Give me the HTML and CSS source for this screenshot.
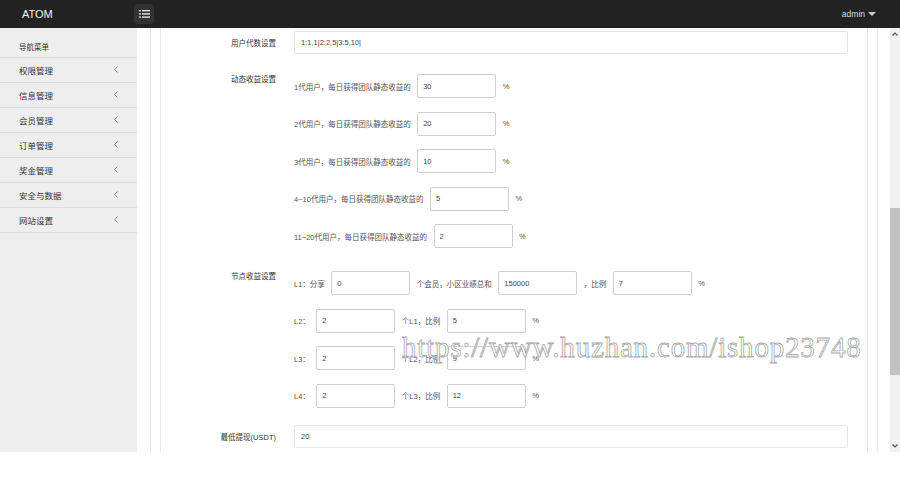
FILE: index.html
```html
<!DOCTYPE html>
<html lang="zh">
<head>
<meta charset="utf-8">
<title>ATOM</title>
<link rel="stylesheet" href="styles.css">
</head>
<body>
<div class="app">
  <header class="topbar">
    <div class="brand">ATOM</div>
    <button class="menu-btn" type="button" aria-label="menu">
      <svg width="11" height="8" viewBox="0 0 11 8">
        <rect x="0" y="0" width="2" height="1.4" fill="#cfcfcf"/>
        <rect x="3" y="0" width="8" height="1.4" fill="#e6e6e6"/>
        <rect x="0" y="3.2" width="2" height="1.4" fill="#cfcfcf"/>
        <rect x="3" y="3.2" width="8" height="1.4" fill="#e6e6e6"/>
        <rect x="0" y="6.4" width="2" height="1.4" fill="#cfcfcf"/>
        <rect x="3" y="6.4" width="8" height="1.4" fill="#e6e6e6"/>
      </svg>
    </button>
    <div class="user">admin <span class="caret"></span></div>
  </header>
  <div class="layout">
    <nav class="sidebar">
      <div class="nav-head">导航菜单</div>
      <div class="nav-item"><span>权限管理</span><svg class="chev" width="4" height="7" viewBox="0 0 4 7"><path d="M3.5 0.5 L0.7 3.5 L3.5 6.5" fill="none" stroke="#777" stroke-width="0.9"/></svg></div>
      <div class="nav-item"><span>信息管理</span><svg class="chev" width="4" height="7" viewBox="0 0 4 7"><path d="M3.5 0.5 L0.7 3.5 L3.5 6.5" fill="none" stroke="#777" stroke-width="0.9"/></svg></div>
      <div class="nav-item"><span>会员管理</span><svg class="chev" width="4" height="7" viewBox="0 0 4 7"><path d="M3.5 0.5 L0.7 3.5 L3.5 6.5" fill="none" stroke="#777" stroke-width="0.9"/></svg></div>
      <div class="nav-item"><span>订单管理</span><svg class="chev" width="4" height="7" viewBox="0 0 4 7"><path d="M3.5 0.5 L0.7 3.5 L3.5 6.5" fill="none" stroke="#777" stroke-width="0.9"/></svg></div>
      <div class="nav-item"><span>奖金管理</span><svg class="chev" width="4" height="7" viewBox="0 0 4 7"><path d="M3.5 0.5 L0.7 3.5 L3.5 6.5" fill="none" stroke="#777" stroke-width="0.9"/></svg></div>
      <div class="nav-item"><span>安全与数据</span><svg class="chev" width="4" height="7" viewBox="0 0 4 7"><path d="M3.5 0.5 L0.7 3.5 L3.5 6.5" fill="none" stroke="#777" stroke-width="0.9"/></svg></div>
      <div class="nav-item"><span>网站设置</span><svg class="chev" width="4" height="7" viewBox="0 0 4 7"><path d="M3.5 0.5 L0.7 3.5 L3.5 6.5" fill="none" stroke="#777" stroke-width="0.9"/></svg></div>
    </nav>
    <main class="main">
      <div class="content">
        <div class="outer">
          <div class="inner">
            <form class="form">
              <div class="group g1 centered">
                <label class="label">用户代数设置</label>
                <input class="wide" type="text" value="1:1,1|2:2,5|3:5,10|">
              </div>
              <div class="group g2">
                <label class="label top">动态收益设置</label>
                <div class="rows">
                  <div class="row"><span>1代用户，每日获得团队静态收益的</span><input class="small" type="text" value="30"><span>%</span></div>
                  <div class="row"><span>2代用户，每日获得团队静态收益的</span><input class="small" type="text" value="20"><span>%</span></div>
                  <div class="row"><span>3代用户，每日获得团队静态收益的</span><input class="small" type="text" value="10"><span>%</span></div>
                  <div class="row"><span>4~10代用户，每日获得团队静态收益的</span><input class="small" type="text" value="5"><span>%</span></div>
                  <div class="row"><span>11~20代用户，每日获得团队静态收益的</span><input class="small" type="text" value="2"><span>%</span></div>
                </div>
              </div>
              <div class="group g3">
                <label class="label top">节点收益设置</label>
                <div class="rows">
                  <div class="row"><span>L1：分享</span><input class="small" type="text" value="0"><span>个会员，小区业绩总和</span><input class="small" type="text" value="150000"><span>，比例</span><input class="small" type="text" value="7"><span>%</span></div>
                  <div class="row"><span>L2：</span><input class="small" type="text" value="2"><span>个L1，比例</span><input class="small" type="text" value="5"><span>%</span></div>
                  <div class="row"><span>L3：</span><input class="small" type="text" value="2"><span>个L2，比例</span><input class="small" type="text" value="9"><span>%</span></div>
                  <div class="row"><span>L4：</span><input class="small" type="text" value="2"><span>个L3，比例</span><input class="small" type="text" value="12"><span>%</span></div>
                </div>
              </div>
              <div class="group g4 centered">
                <label class="label">最低提现(USDT)</label>
                <input class="wide" type="text" value="20">
              </div>
            </form>
          </div>
        </div>
      </div>
      <div class="scrollbar">
        <svg class="arrow" width="6" height="4" viewBox="0 0 6 4"><path d="M0.5 3.5 L3 1 L5.5 3.5" fill="none" stroke="#505050" stroke-width="1.2"/></svg>
        <div class="track"><div class="thumb"></div></div>
        <svg class="arrow" width="6" height="4" viewBox="0 0 6 4"><path d="M0.5 0.5 L3 3 L5.5 0.5" fill="none" stroke="#505050" stroke-width="1.2"/></svg>
      </div>
    </main>
  </div>
</div>
<div class="watermark">https://www.huzhan.com/ishop23748</div>
</body>
</html>
```
FILE: styles.css
```css
* { box-sizing: border-box; }
html, body { margin: 0; padding: 0; background: #fff; }
body {
  font-family: "Liberation Sans", "Noto Sans CJK SC", sans-serif;
  color: #333;
  position: relative;
}
.app {
  height: 452px;
  display: flex;
  flex-direction: column;
  overflow: hidden;
}
.topbar {
  height: 28px;
  flex: 0 0 28px;
  background: #222;
  display: flex;
  align-items: center;
}
.brand {
  width: 134px;
  padding-left: 22px;
  color: #f2f2f2;
  font-size: 11px;
}
.menu-btn {
  width: 20px;
  height: 20px;
  padding: 0;
  border: none;
  border-radius: 3px;
  background: #333;
  display: flex;
  align-items: center;
  justify-content: center;
}
.user {
  margin-left: auto;
  padding-right: 24px;
  color: #ddd;
  font-size: 8.5px;
  display: flex;
  align-items: center;
  gap: 3px;
}
.caret {
  width: 0;
  height: 0;
  border-left: 4px solid transparent;
  border-right: 4px solid transparent;
  border-top: 4px solid #ccc;
}
.layout {
  flex: 1;
  display: flex;
  min-height: 0;
}
.sidebar {
  width: 137px;
  flex: 0 0 137px;
  background: #eee;
}
.nav-head {
  height: 30px;
  padding: 7px 0 0 19px;
  display: flex;
  align-items: center;
  font-size: 7.5px;
  color: #333;
  border-bottom: 1px solid #dcdcdc;
}
.nav-item {
  height: 25px;
  padding: 0 19px;
  display: flex;
  align-items: center;
  justify-content: space-between;
  font-size: 8.5px;
  color: #333;
  border-bottom: 1px solid #dcdcdc;
}
.chev { margin-top: -2px; }
.main {
  flex: 1;
  display: flex;
  min-width: 0;
}
.content {
  flex: 1;
  padding: 0 12px 0 13px;
}
.outer {
  height: 100%;
  border-left: 1px solid #e8e8e8;
  border-right: 1px solid #e8e8e8;
  padding: 0 9px;
}
.inner {
  height: 100%;
  border-left: 1px solid #e8e8e8;
  border-right: 1px solid #e8e8e8;
}
.form {
  padding: 3px 19px 0 0;
  font-size: 7.5px;
}
.group {
  display: flex;
  gap: 18px;
}
.group.centered { align-items: center; }
.g1 { margin-bottom: 20px; }
.g2 { margin-bottom: 23px; }
.g3 { margin-bottom: 17px; }
.label {
  width: 115px;
  flex: 0 0 115px;
  text-align: right;
  color: #333;
  font-size: 7.5px;
}
.label.top {
  line-height: 11px;
}
.rows {
  display: flex;
  flex-direction: column;
  gap: 13.5px;
}
.row {
  height: 24px;
  display: flex;
  align-items: center;
  gap: 6.5px;
  color: #555;
}
input {
  font-family: "Liberation Sans", "Noto Sans CJK SC", sans-serif;
  font-size: 7.5px;
  color: #444;
  background: #fff;
  margin: 0;
  outline: none;
}
.wide {
  flex: 1;
  height: 23px;
  border: 1px solid #e6e6e6;
  border-radius: 2px;
  padding: 0 0 0 6px;
}
.small {
  width: 79px;
  height: 24px;
  border: 1px solid #cfcfcf;
  border-radius: 2px;
  padding: 0 0 0 5px;
}
.scrollbar {
  width: 10px;
  flex: 0 0 10px;
  background: #f1f1f1;
  display: flex;
  flex-direction: column;
  align-items: center;
}
.arrow { flex: 0 0 auto; margin: 4px 0; }
.track {
  flex: 1;
  width: 100%;
  padding-top: 168px;
}
.thumb {
  height: 167px;
  background: #c1c1c1;
}
.watermark {
  position: absolute;
  left: 402px;
  top: 333px;
  font-family: "Liberation Serif", serif;
  font-size: 29px;
  line-height: 29px;
  letter-spacing: 0.8px;
  white-space: nowrap;
  color: rgba(255, 255, 255, 0.75);
  -webkit-text-stroke: 0.8px #a8a8a8;
  pointer-events: none;
}
```
